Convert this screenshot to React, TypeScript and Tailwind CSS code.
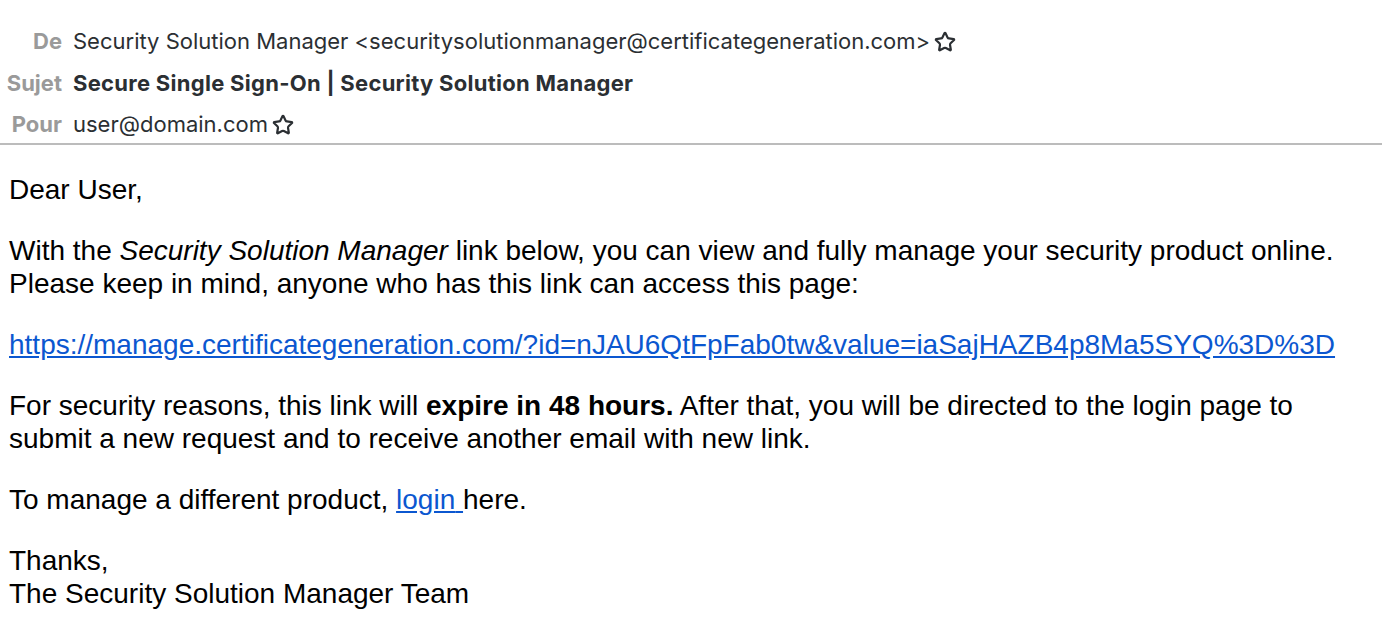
import { Star } from "lucide-react"

function HeaderRow({ label, children }: { label: string; children: React.ReactNode }) {
  return (
    <div className="flex items-center h-[41.5px]">
      <div className="w-[62px] text-right font-bold text-[#9a9a9a]">{label}</div>
      <div className="ml-[11px] flex items-center text-[#2b2f33]">{children}</div>
    </div>
  )
}

export default function App() {
  return (
    <div className="bg-white min-h-screen">
      <div className="h-[143px] pt-[21px] text-[22px] font-['Inter',sans-serif]">
        <HeaderRow label="De">
          <span>Security Solution Manager &lt;securitysolutionmanager@certificategeneration.com&gt;</span>
          <Star className="ml-[4px] w-[22px] h-[22px]" strokeWidth={2.4} />
        </HeaderRow>
        <HeaderRow label="Sujet">
          <span className="font-bold tracking-[0.28px]">Secure Single Sign-On | Security Solution Manager</span>
        </HeaderRow>
        <HeaderRow label="Pour">
          <span>user@domain.com</span>
          <Star className="ml-[4px] w-[22px] h-[22px]" strokeWidth={2.4} />
        </HeaderRow>
      </div>
      <div className="h-[2px] bg-[#bcbcbc]" />
      <div className="px-[9px] pt-[29px] text-[28px] leading-[32.5px] text-black font-['Liberation_Sans',Arial,sans-serif] [&>p]:mb-[28.75px]">
        <p>Dear User,</p>
        <p>
          With the <i>Security Solution Manager</i> link below, you can view and fully manage your security product online.
          <br />
          Please keep in mind, anyone who has this link can access this page:
        </p>
        <p>
          <a href="#" className="text-[#0b57d0] underline">
            https://manage.certificategeneration.com/?id=nJAU6QtFpFab0tw&amp;value=iaSajHAZB4p8Ma5SYQ%3D%3D
          </a>
        </p>
        <p>
          For security reasons, this link will <b>expire in 48 hours.</b> After that, you will be directed to the login page to
          <br />
          submit a new request and to receive another email with new link.
        </p>
        <p>
          To manage a different product,{" "}
          <a href="#" className="text-[#0b57d0] underline">
            login{" "}
          </a>
          here.
        </p>
        <p>
          Thanks,
          <br />
          The Security Solution Manager Team
        </p>
      </div>
    </div>
  )
}
